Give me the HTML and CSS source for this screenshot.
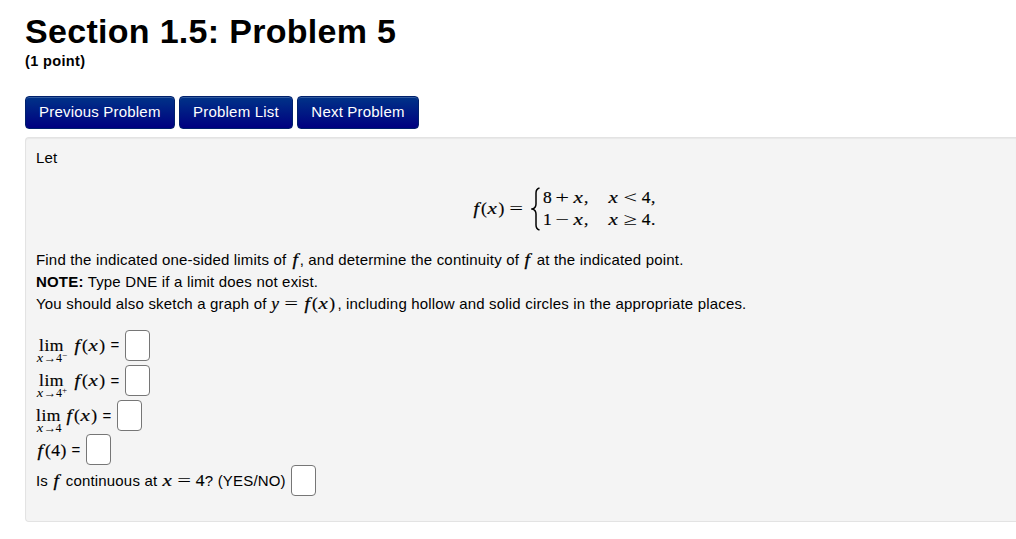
FILE: index.html
```html
<!DOCTYPE html>
<html lang="en">
<head>
    <meta charset="UTF-8">
    <meta name="viewport" content="width=device-width, initial-scale=1.0">
    <title>Section 1.5: Problem 5</title>
    <link rel="stylesheet" href="styles.css">
</head>
<body>
    <header>
        <h1>Section 1.5: Problem 5</h1>
        <p class="points">(1 point)</p>
    </header>

    <nav class="problem-nav">
        <a class="btn">Previous Problem</a>
        <a class="btn">Problem List</a>
        <a class="btn">Next Problem</a>
    </nav>

    <main class="problem">
        <p>Let</p>

        <div class="display">
            <span class="math"><i class="f">f</i>(<i>x</i>)<span class="op">=</span></span>
            <svg class="brace" width="10" height="44" viewBox="0 0 10 44">
                <path d="M8.5 1C5.8 1.7 5 3.2 5 6v11c0 2.7-1 4.2-3.8 5 2.8.8 3.8 2.3 3.8 5v11c0 2.8.8 4.3 3.5 5" fill="none" stroke="#000" stroke-width="1.5"/>
            </svg>
            <div class="cases">
                <span class="math">8<span class="op bin">+</span><i>x</i>,</span>
                <span class="math"><i>x</i><span class="op">&lt;</span>4,</span>
                <span class="math">1<span class="op bin">−</span><i>x</i>,</span>
                <span class="math"><i>x</i><span class="op">≥</span>4.</span>
            </div>
        </div>

        <p>Find the indicated one-sided limits of <span class="math"><i class="f">f</i></span>, and determine the continuity of <span class="math"><i class="f">f</i></span> at the indicated point.</p>
        <p><b>NOTE:</b> Type DNE if a limit does not exist.</p>
        <p>You should also sketch a graph of <span class="math graph"><i class="y">y</i><span class="op">=</span><i class="f">f</i>(<i>x</i>)</span>, including hollow and solid circles in the appropriate places.</p>

        <div class="answers">
            <div class="answer">
                <span class="math limit"><span class="lim"><span>lim</span><small><i>x</i><span class="to">→</span>4<sup>−</sup></small></span><i class="f">f</i>(<i>x</i>)</span>
                <span class="eq">=</span><input type="text">
            </div>
            <div class="answer">
                <span class="math limit"><span class="lim"><span>lim</span><small><i>x</i><span class="to">→</span>4<sup>+</sup></small></span><i class="f">f</i>(<i>x</i>)</span>
                <span class="eq">=</span><input type="text">
            </div>
            <div class="answer">
                <span class="math limit"><span class="lim plain"><span>lim</span><small><i>x</i><span class="to">→</span>4</small></span><i class="f">f</i>(<i>x</i>)</span>
                <span class="eq">=</span><input type="text">
            </div>
            <div class="answer short">
                <span class="math value"><i class="f">f</i>(4)</span>
                <span class="eq">=</span><input type="text">
            </div>
            <div class="answer short">
                <p>Is <span class="math"><i class="f">f</i></span> continuous at <span class="math"><i>x</i><span class="op">=</span>4</span>? (YES/NO)</p><input type="text">
            </div>
        </div>
    </main>
</body>
</html>
```

FILE: styles.css
```css
* {
    margin: 0;
    padding: 0;
    box-sizing: border-box;
}

body {
    background: #fff;
    color: #000;
    font: 15px/22px "Liberation Sans", Arial, sans-serif;
    letter-spacing: 0.18px;
    padding: 11px 0 0 25px;
    overflow: hidden;
}

h1 {
    font-size: 34px;
    line-height: 40px;
    letter-spacing: 0.3px;
}

.points {
    font-size: 14.5px;
    line-height: 20px;
    font-weight: bold;
    letter-spacing: 0.35px;
}

.problem-nav {
    display: flex;
    gap: 4px;
    margin-top: 25px;
}

.btn {
    height: 33px;
    padding: 0 13.5px 0 13px;
    border: 1px solid #00206c;
    border-radius: 4px;
    background: linear-gradient(#003388, #000080);
    box-shadow: inset 0 1px 0 rgba(255, 255, 255, 0.2);
    color: #fff;
    line-height: 30px;
    letter-spacing: 0.2px;
    white-space: nowrap;
}

.problem {
    height: 385px;
    margin-top: 8px;
    padding: 9px 0 0 10px;
    background: #f4f4f4;
    border: 1px solid #e3e3e3;
    border-right: 0;
    border-radius: 4px 0 0 4px;
    box-shadow: inset 0 1px 1px rgba(0, 0, 0, 0.05);
    white-space: nowrap;
}

.problem p {
    height: 22px;
}

/* math */
.math {
    font-family: "Liberation Serif", "Times New Roman", serif;
    font-size: 17.5px;
    line-height: 20px;
    letter-spacing: 0.4px;
    -webkit-text-stroke: 0.2px;
}

.math i {
    display: inline-block;
    width: 11px;
    text-align: center;
    transform: scaleX(1.2);
}

.math .f {
    width: 9px;
    transform: scaleX(1.1);
    -webkit-text-stroke: 0.3px;
}

.math .y {
    width: 9px;
    transform: none;
}

.graph {
    margin-right: 2px;
}

.op {
    display: inline-block;
    width: 13px;
    margin: 0 5px;
    text-align: center;
    transform: scaleX(1.4);
    -webkit-text-stroke: 0;
}

.bin {
    margin: 0 4px;
}

.display {
    display: flex;
    align-items: center;
    height: 44px;
    margin: 17px 0 19px;
    padding-left: 436px;
}

.display > .math {
    letter-spacing: 0.6px;
}

.brace {
    margin: 1px 2px 0 3px;
}

.cases {
    display: grid;
    grid-template-columns: auto auto;
    column-gap: 19px;
}

.cases .math {
    line-height: 22px;
}

/* answers */
.answers {
    padding-top: 12px;
}

.answer {
    display: flex;
    align-items: center;
    height: 35px;
}

.answer:first-child {
    height: 36px;
}

.answer.short {
    height: 31px;
}

.answer:nth-child(4) {
    margin-top: 1px;
}

.limit {
    display: flex;
    align-items: baseline;
    padding-top: 6px;
    margin-right: 0;
}

.lim {
    display: flex;
    flex-direction: column;
    align-items: center;
    width: 33px;
    margin: 0 5px 0 -1px;
}

.lim.plain {
    width: 27px;
    margin-right: 3px;
}

.lim > span {
    height: 19px;
    letter-spacing: 0.5px;
}

.lim small {
    font-size: 12px;
    line-height: 8px;
    height: 8px;
    letter-spacing: 0;
    -webkit-text-stroke: 0;
}

.lim small i {
    width: 8px;
}

.to {
    display: inline-block;
    width: 12px;
    text-align: center;
    transform: scaleX(1.05);
}

.lim sup {
    font-size: 9px;
    line-height: 0;
    vertical-align: 4px;
}

.eq {
    margin: 0 6px 0 5px;
}

.value + .eq {
    margin-right: 5px;
}

.answer input {
    width: 25px;
    height: 31px;
    border: 1px solid #767676;
    border-radius: 4px;
    background: #fff;
}

.answer p + input {
    margin-left: 5px;
}
```
